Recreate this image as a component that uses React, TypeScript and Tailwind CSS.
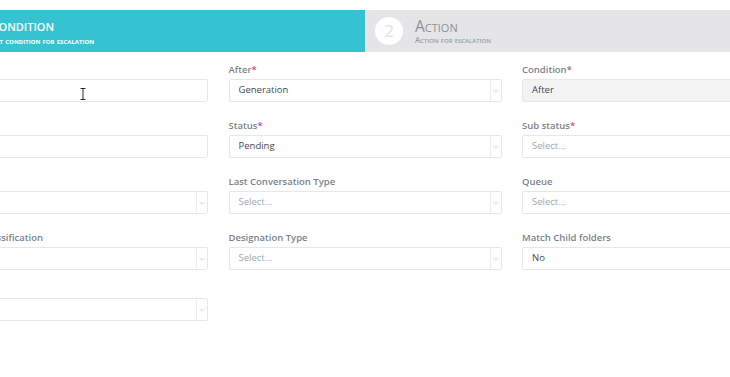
import React from "react";

const Chevron = () => (
  <svg width="6" height="4" viewBox="0 0 6 4" fill="none">
    <path d="M0.5 0.8 L3 3.2 L5.5 0.8" stroke="#c9cbcf" strokeWidth="0.8" />
  </svg>
);

type FieldProps = {
  label?: string;
  required?: boolean;
  value?: string;
  placeholder?: string;
  arrow?: boolean;
  disabled?: boolean;
  cursor?: boolean;
};

const Field = ({ label, required, value, placeholder, arrow, disabled, cursor }: FieldProps) => (
  <div className="w-[273px] shrink-0 flex flex-col">
    <div className="h-[14px] leading-[14px] text-[9.5px] font-semibold text-[#7c828b] whitespace-nowrap">
      {label}
      {required && <span className="text-[#e2475f]">*</span>}
    </div>
    <div
      className={
        disabled
          ? "relative mt-[2px] h-[23px] border border-[#e7e7e9] rounded-[2px] bg-[#f3f3f4] flex items-stretch"
          : "relative mt-[2px] h-[23px] border border-[#e7e7e9] rounded-[2px] bg-white flex items-stretch"
      }
    >
      <div className="flex-1 flex items-center pl-[9px] text-[9.5px]">
        {value ? (
          <span className="text-[#454a50]">{value}</span>
        ) : placeholder ? (
          <span className="text-[#a3a6ab]">{placeholder}</span>
        ) : null}
      </div>
      {arrow && (
        <div className="w-[11px] border-l border-[#ececee] flex items-center justify-center">
          <Chevron />
        </div>
      )}
      {cursor && (
        <svg className="absolute left-[144px] top-[8px]" width="6" height="12" viewBox="0 0 6 12">
          <path d="M0.5 0.5 H5.5 M3 0.5 V11.5 M0.5 11.5 H5.5" stroke="#2d2d2d" strokeWidth="1" fill="none" />
        </svg>
      )}
    </div>
  </div>
);

export default function App() {
  return (
    <div className="w-[730px] h-[377px] overflow-hidden bg-white font-['Open_Sans',sans-serif]">
      <div className="pt-[10px] flex h-[52px] w-[730px]">
        <div className="w-[365px] h-[42px] bg-[#36c3d1] flex flex-col justify-center overflow-hidden">
          <div className="-ml-[11px] text-[15px] leading-[17px] font-semibold text-white [font-variant:small-caps] whitespace-nowrap">
            Condition
          </div>
          <div className="-ml-[19px] mt-[2px] text-[8.5px] leading-[10px] font-bold text-white [font-variant:small-caps] whitespace-nowrap">
            Select condition for escalation
          </div>
        </div>
        <div className="flex-1 h-[42px] bg-[#e5e5e7] flex items-center pl-[10px] gap-[12px]">
          <div className="w-[28px] h-[28px] rounded-full bg-white flex items-center justify-center text-[17px] text-[#e0e0e3]">
            2
          </div>
          <div className="flex flex-col">
            <div className="text-[15.5px] leading-[18px] text-[#8c9197] [font-variant:small-caps]">Action</div>
            <div className="text-[8px] leading-[10px] font-semibold text-[#979ca2] [font-variant:small-caps] whitespace-nowrap">
              Action for escalation
            </div>
          </div>
        </div>
      </div>

      <div className="-ml-[65px] mt-[11px] flex flex-col w-[870px]">
        <div className="flex gap-[20.5px]">
          <Field label="Time" required cursor />
          <Field label="After" required value="Generation" arrow />
          <Field label="Condition" required value="After" disabled />
        </div>
        <div className="flex gap-[20.5px] mt-[17px]">
          <Field label="Unit" required />
          <Field label="Status" required value="Pending" arrow />
          <Field label="Sub status" required placeholder="Select..." arrow />
        </div>
        <div className="flex gap-[20.5px] mt-[17px]">
          <Field label="Priority" arrow />
          <Field label="Last Conversation Type" placeholder="Select..." arrow />
          <Field label="Queue" placeholder="Select..." arrow />
        </div>
        <div className="flex gap-[20.5px] mt-[17px]">
          <Field label="Customer Classification" arrow />
          <Field label="Designation Type" placeholder="Select..." arrow />
          <Field label="Match Child folders" value="No" arrow />
        </div>
        <div className="flex gap-[20.5px] mt-[12px]">
          <Field label="Folder" arrow />
        </div>
      </div>
    </div>
  );
}
